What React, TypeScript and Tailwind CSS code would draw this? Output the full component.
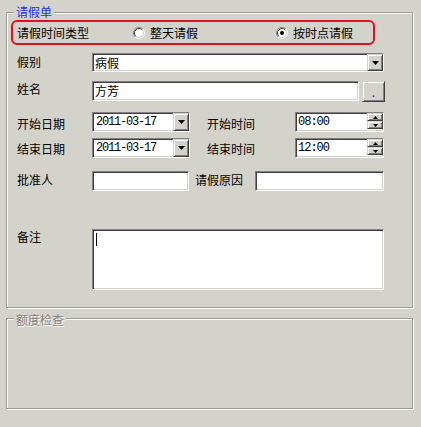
import React from "react";

const BG = "bg-[#d4d3cb]";
const sunken =
  "border border-t-[#808080] border-l-[#808080] border-b-white border-r-white shadow-[inset_1px_1px_0_#404040,inset_-1px_-1px_0_#d4d3cb] bg-white";
const raised =
  "border border-t-[#d4d3cb] border-l-[#d4d3cb] border-b-[#404040] border-r-[#404040] shadow-[inset_1px_1px_0_#ffffff,inset_-1px_-1px_0_#808080] bg-[#d4d3cb]";

function Radio({ checked }: { checked?: boolean }) {
  return (
    <svg width="12" height="12" viewBox="0 0 12 12" className="shrink-0">
      <circle cx="6" cy="6" r="4.5" fill="#ffffff" />
      <path d="M2.11 9.89 A5.5 5.5 0 0 1 9.89 2.11" stroke="#808080" strokeWidth="1" fill="none" />
      <path d="M9.89 2.11 A5.5 5.5 0 0 1 2.11 9.89" stroke="#ffffff" strokeWidth="1" fill="none" />
      <path d="M2.82 9.18 A4.5 4.5 0 0 1 9.18 2.82" stroke="#404040" strokeWidth="1" fill="none" />
      <path d="M9.18 2.82 A4.5 4.5 0 0 1 2.82 9.18" stroke="#d4d3cb" strokeWidth="1" fill="none" />
      {checked && <circle cx="6" cy="6" r="2" fill="#000000" />}
    </svg>
  );
}

function DownBtn() {
  return (
    <div className={`${raised} w-[16px] h-full flex items-center justify-center shrink-0`}>
      <svg width="7" height="4" viewBox="0 0 7 4">
        <path d="M0 0 H7 L3.5 4 Z" fill="#000" />
      </svg>
    </div>
  );
}

function Combo({ w, h, text, mono }: { w: string; h: string; text: string; mono?: boolean }) {
  return (
    <div className={`${sunken} ${w} ${h} flex items-stretch shrink-0`}>
      <div
        className={`flex-1 flex items-center ${
          mono
            ? "pl-[3px] font-['Liberation_Mono',monospace] text-[12px] tracking-[-1.2px]"
            : "pl-[2px]"
        }`}
      >
        {text}
      </div>
      <DownBtn />
    </div>
  );
}

function Spinner({ text }: { text: string }) {
  return (
    <div className={`${sunken} w-[89px] h-[20px] flex items-stretch shrink-0`}>
      <div className="flex-1 flex items-center pl-[2px] font-['Liberation_Mono',monospace] text-[12px] tracking-[-1px]">
        {text}
      </div>
      <div className="flex flex-col w-[16px] shrink-0">
        <div className={`${raised} h-[8px] flex items-center justify-center`}>
          <svg width="5" height="3" viewBox="0 0 5 3">
            <path d="M2.5 0 L5 3 H0 Z" fill="#000" />
          </svg>
        </div>
        <div className={`${raised} h-[8px] flex items-center justify-center`}>
          <svg width="5" height="3" viewBox="0 0 5 3">
            <path d="M0 0 H5 L2.5 3 Z" fill="#000" />
          </svg>
        </div>
      </div>
    </div>
  );
}

function Input({ w, h, text }: { w: string; h: string; text?: string }) {
  return (
    <div className={`${sunken} ${w} ${h} flex items-center pl-[2px] shrink-0`}>{text}</div>
  );
}

export default function App() {
  return (
    <div
      className={`w-[421px] h-[427px] ${BG} pt-[12px] pl-[6px] font-['Noto_Sans_CJK_SC',sans-serif] text-[12px] leading-[16px] text-black overflow-hidden`}
    >
      <div className="relative w-[407px] h-[296px] border border-[#9b9b95] shadow-[inset_1px_1px_0_#ffffff,1px_1px_0_#ffffff] pt-[7px] pl-[4px]">
        <div className={`absolute left-[7px] top-[-9px] px-[2px] ${BG} text-[#1a33e6]`}>请假单</div>

        <div className="w-[364px] h-[25px] border-2 border-[#e0101e] rounded-[6px] flex items-center pl-[4px]">
          <span className="w-[116px] shrink-0">请假时间类型</span>
          <Radio />
          <span className="ml-[5px]">整天请假</span>
          <span className="ml-[78px] flex items-center">
            <Radio checked />
            <span className="ml-[5px]">按时点请假</span>
          </span>
        </div>

        <div className="pl-[6px] flex flex-col">
          <div className="mt-[8px] flex items-start h-[19px]">
            <span className="w-[75px] shrink-0 mt-[1px]">假别</span>
            <Combo w="w-[292px]" h="h-[19px]" text="病假" />
          </div>

          <div className="mt-[9px] flex items-start h-[21px]">
            <span className="w-[75px] shrink-0 mt-[0px]">姓名</span>
            <Input w="w-[267px]" h="h-[20px]" text="方芳" />
            <div className={`${raised} ml-[3px] w-[23px] h-[21px] flex items-center justify-center text-[#2020ff] leading-[10px]`}>
              .
            </div>
          </div>

          <div className="mt-[10px] flex items-start h-[20px]">
            <span className="w-[75px] shrink-0 mt-[4px]">开始日期</span>
            <Combo w="w-[98px]" h="h-[20px]" text="2011-03-17" mono />
            <span className="ml-[17px] w-[88px] shrink-0 mt-[4px]">开始时间</span>
            <Spinner text="08:00" />
          </div>

          <div className="mt-[6px] flex items-start h-[20px]">
            <span className="w-[75px] shrink-0 mt-[3px]">结束日期</span>
            <Combo w="w-[98px]" h="h-[20px]" text="2011-03-17" mono />
            <span className="ml-[17px] w-[88px] shrink-0 mt-[3px]">结束时间</span>
            <Spinner text="12:00" />
          </div>

          <div className="mt-[13px] flex items-start h-[20px]">
            <span className="w-[75px] shrink-0 mt-[1px]">批准人</span>
            <Input w="w-[97px]" h="h-[20px]" />
            <span className="ml-[6px] w-[60px] shrink-0 mt-[1px]">请假原因</span>
            <Input w="w-[129px]" h="h-[20px]" />
          </div>

          <div className="mt-[38px] flex items-start h-[61px]">
            <span className="w-[75px] shrink-0 mt-[0px]">备注</span>
            <div className={`${sunken} w-[292px] h-[61px] pt-[3px] pl-[3px]`}>
              <div className="w-[1px] h-[13px] bg-black" />
            </div>
          </div>
        </div>
      </div>

      <div className="relative mt-[10px] w-[407px] h-[91px] border border-[#9b9b95] shadow-[inset_1px_1px_0_#ffffff,1px_1px_0_#ffffff]">
        <div className={`absolute left-[7px] top-[-7px] px-[2px] ${BG} text-[#808080] [text-shadow:1px_1px_0_#ffffff]`}>
          额度检查
        </div>
      </div>
    </div>
  );
}
